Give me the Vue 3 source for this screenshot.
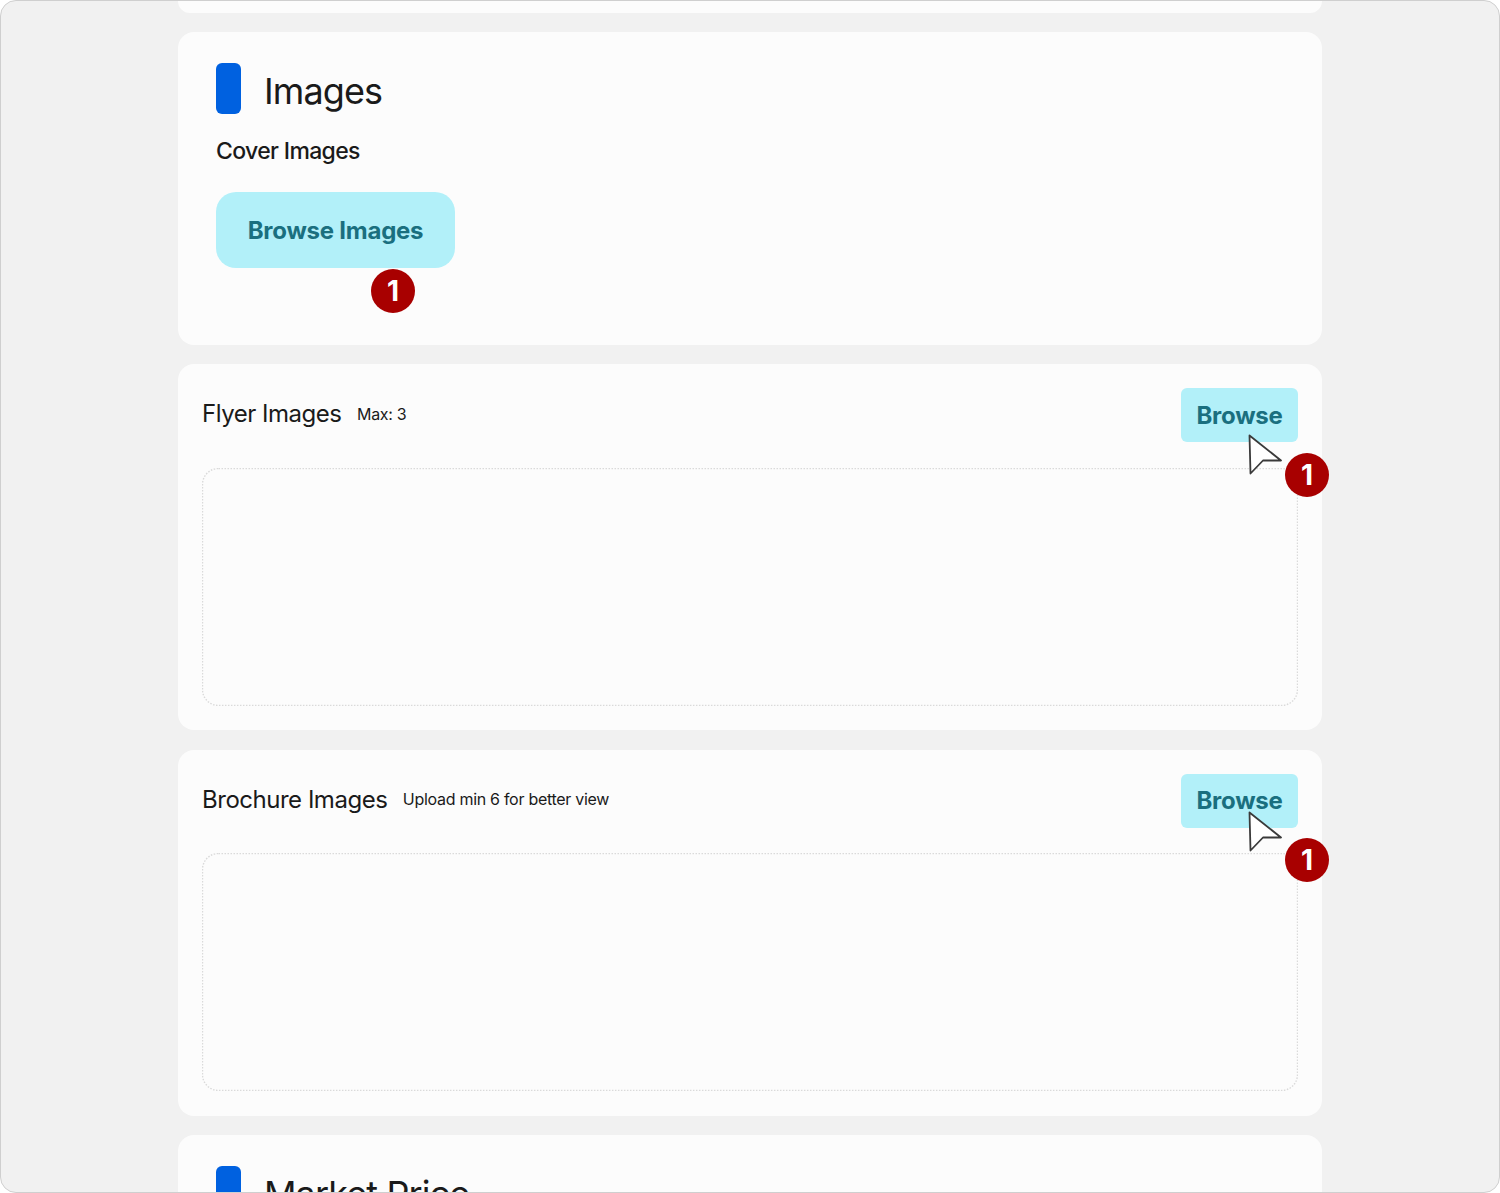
<template>
  <div class="frame">
    <div class="card stub"></div>

    <section class="card heading-card">
      <div class="heading">
        <span class="marker"></span>
        <h2>Images</h2>
      </div>
      <h3>Cover Images</h3>
      <div class="cover-action">
        <button class="btn btn-large">Browse Images</button>
        <span class="badge badge-cover">1</span>
      </div>
    </section>

    <section v-for="group in groups" :key="group.title" class="card upload">
      <div class="upload-head" :style="{ height: group.headHeight + 'px' }">
        <div class="upload-title">
          <h4>{{ group.title }}</h4>
          <span class="hint">{{ group.hint }}</span>
        </div>
        <button class="btn btn-small">Browse</button>
      </div>
      <div class="dropzone">
        <svg class="dots" width="1096" height="238">
          <rect x="0.5" y="0.5" width="1095" height="237" rx="16" fill="none" stroke="#dadada" stroke-width="1.4" stroke-dasharray="1.5 1.5" />
        </svg>
      </div>
      <svg class="cursor" :style="{ top: group.cursorTop + 'px' }" width="38" height="44" viewBox="0 0 38 44">
        <path d="M2.5 2.5 L34 27.5 L16 27.5 L3.5 40.5 Z" fill="#fff" stroke="#3a3a3a" stroke-width="1.8" stroke-linejoin="round" />
      </svg>
      <span class="badge badge-upload" :style="{ top: group.badgeTop + 'px' }">1</span>
    </section>

    <section class="card heading-card">
      <div class="heading">
        <span class="marker"></span>
        <h2>Market Price</h2>
      </div>
    </section>
  </div>
</template>

<script setup>
const groups = [
  { title: "Flyer Images", hint: "Max: 3", headHeight: 80, cursorTop: 69, badgeTop: 89 },
  { title: "Brochure Images", hint: "Upload min 6 for better view", headHeight: 79, cursorTop: 60, badgeTop: 88 },
];
</script>

<style>
html,
body {
  background: #fff;
}
</style>

<style scoped>
.frame {
  box-sizing: border-box;
  height: 1193px;
  overflow: hidden;
  display: flex;
  flex-direction: column;
  gap: 19.4px;
  padding: 0 177px;
  background: #f1f1f1;
  border: 1px solid #cfcfcf;
  border-radius: 16px;
  font-family: Inter, "Liberation Sans", sans-serif;
  color: #1a1a1a;
  letter-spacing: -0.02em;
}

.card {
  position: relative;
  flex: none;
  background: #fcfcfc;
  border-radius: 16px;
}

.stub {
  height: 11.6px;
  border-radius: 0 0 16px 16px;
}

.heading-card {
  padding: 31px 38px 32px;
}

.heading {
  display: flex;
  align-items: center;
  gap: 23px;
  height: 51px;
}

.marker {
  width: 25px;
  height: 51px;
  background: #0061e0;
  border-radius: 6px;
}

h2 {
  margin: 5px 0 0;
  font-size: 36px;
  font-weight: 400;
  line-height: 54px;
  letter-spacing: -0.025em;
}

h3 {
  margin: 21px 0 0;
  font-size: 23px;
  font-weight: 500;
  line-height: 32px;
  letter-spacing: -0.028em;
}

.cover-action {
  position: relative;
  margin-top: 25px;
  height: 121px;
}

.btn {
  display: block;
  border: 0;
  padding: 0;
  background: #b2f0f9;
  color: #1a6f7f;
  font-family: inherit;
  font-weight: 700;
  font-size: 24px;
  letter-spacing: -0.01em;
}

.btn-large {
  width: 239px;
  height: 76px;
  padding-top: 2px;
  border-radius: 20px;
}

.btn-small {
  width: 117px;
  height: 54px;
  border-radius: 6px;
}

.upload {
  height: 366px;
  box-sizing: border-box;
  padding: 24px;
}

.upload-head {
  display: flex;
  justify-content: space-between;
  align-items: flex-start;
}

.upload-title {
  display: flex;
  align-items: center;
  gap: 15.5px;
  height: 51px;
}

h4 {
  margin: 0;
  font-size: 24px;
  font-weight: 400;
  letter-spacing: -0.02em;
}

.hint {
  font-size: 16px;
  letter-spacing: -0.018em;
}

.dropzone {
  height: 238px;
}

.dots {
  display: block;
}

.badge {
  position: absolute;
  width: 44px;
  height: 44px;
  display: flex;
  align-items: center;
  justify-content: center;
  border-radius: 50%;
  background: #a80000;
  color: #fff;
  font-size: 28px;
  font-weight: 700;
}

.badge-cover {
  left: 155px;
  top: 77px;
}

.badge-upload {
  right: -7px;
}

.cursor {
  position: absolute;
  right: 37px;
}
</style>
